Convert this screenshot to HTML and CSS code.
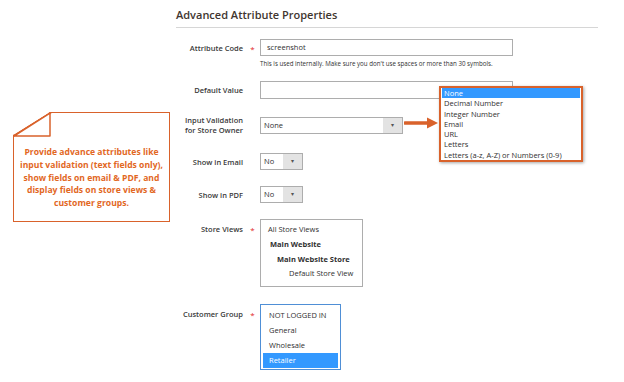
FILE: index.html
```html
<!DOCTYPE html>
<html lang="en">
<head>
    <meta charset="UTF-8">
    <title>Advanced Attribute Properties</title>
    <link rel="stylesheet" href="styles.css">
</head>
<body>
    <div class="page">
        <h2 class="section-title">Advanced Attribute Properties</h2>

        <div class="field row-code">
            <label class="field-label">Attribute Code</label>
            <span class="req">*</span>
            <div class="control">
                <div class="input input-wide">screenshot</div>
                <div class="note">This is used internally. Make sure you don't use spaces or more than 30 symbols.</div>
            </div>
        </div>

        <div class="field row-default">
            <label class="field-label">Default Value</label>
            <span class="req"></span>
            <div class="control">
                <div class="input input-wide"></div>
            </div>
        </div>

        <div class="field row-validation">
            <label class="field-label">Input Validation for Store Owner</label>
            <span class="req"></span>
            <div class="control">
                <div class="select select-mid">
                    <span class="select-value">None</span>
                    <span class="select-btn">&#9662;</span>
                </div>
            </div>
        </div>

        <div class="field row-email">
            <label class="field-label">Show in Email</label>
            <span class="req"></span>
            <div class="control">
                <div class="select select-small">
                    <span class="select-value">No</span>
                    <span class="select-btn">&#9662;</span>
                </div>
            </div>
        </div>

        <div class="field row-pdf">
            <label class="field-label">Show in PDF</label>
            <span class="req"></span>
            <div class="control">
                <div class="select select-small">
                    <span class="select-value">No</span>
                    <span class="select-btn">&#9662;</span>
                </div>
            </div>
        </div>

        <div class="field field-top row-stores">
            <label class="field-label">Store Views</label>
            <span class="req">*</span>
            <div class="control">
                <div class="multi multi-stores">
                    <div class="opt">All Store Views</div>
                    <div class="opt opt-group">Main Website</div>
                    <div class="opt opt-group opt-sub">Main Website Store</div>
                    <div class="opt opt-view">Default Store View</div>
                </div>
            </div>
        </div>

        <div class="field field-top row-groups">
            <label class="field-label">Customer Group</label>
            <span class="req">*</span>
            <div class="control">
                <div class="multi multi-groups">
                    <div class="opt">NOT LOGGED IN</div>
                    <div class="opt">General</div>
                    <div class="opt">Wholesale</div>
                    <div class="opt opt-selected">Retailer</div>
                </div>
            </div>
        </div>

        <!-- annotation: callout note -->
        <div class="callout">
            <svg class="callout-fold" width="40" height="26" viewBox="0 0 40 26">
                <path d="M1 24 L37 1 L37 24 Z" fill="#fff" stroke="#d9622b" stroke-width="1.5" stroke-linejoin="round"/>
            </svg>
            <p>Provide advance attributes like input validation (text fields only), show fields on email &amp; PDF, and display fields on store views &amp; customer groups.</p>
        </div>

        <!-- annotation: arrow + open dropdown -->
        <svg class="pointer" width="36" height="12" viewBox="0 0 36 12">
            <path d="M1 6 H26" stroke="#d9622b" stroke-width="3.5" stroke-linecap="round"/>
            <path d="M23 0.5 L34 6 L23 11.5 Z" fill="#d9622b"/>
        </svg>
        <ul class="dropdown">
            <li class="active">None</li>
            <li>Decimal Number</li>
            <li>Integer Number</li>
            <li>Email</li>
            <li>URL</li>
            <li>Letters</li>
            <li>Letters (a-z, A-Z) or Numbers (0-9)</li>
        </ul>
    </div>
</body>
</html>
```

FILE: styles.css
```css
* {
    margin: 0;
    padding: 0;
    box-sizing: border-box;
}

body {
    font-family: 'Open Sans', 'Liberation Sans', sans-serif;
    background: #fff;
    color: #333;
}

.page {
    position: relative;
    width: 624px;
    height: 382px;
    padding: 7px 26px 0 176px;
}

.section-title {
    font-size: 11px;
    font-weight: 600;
    color: #41362f;
    padding-bottom: 5px;
    border-bottom: 1px solid #d6d6d6;
    margin-bottom: 11px;
}

.field {
    display: grid;
    grid-template-columns: 67px 17px auto;
    align-items: center;
}

.field-top {
    align-items: start;
}

.field-label {
    font-size: 7.5px;
    font-weight: 600;
    color: #3a3a3a;
    text-align: right;
    line-height: 10px;
}

.field-top .field-label {
    padding-top: 5px;
}

.req {
    color: #e22626;
    font-size: 8px;
    text-align: center;
    padding-left: 2px;
}

.field-top .req {
    padding-top: 5px;
}

.input {
    height: 17px;
    border: 1px solid #adadad;
    background: #fff;
    font-size: 7.5px;
    line-height: 15px;
    padding: 0 6px;
    color: #303030;
}

.input-wide {
    width: 253px;
}

.note {
    font-size: 6.2px;
    color: #303030;
    margin-top: 3px;
}

.row-code {
    align-items: start;
}

.row-code .field-label,
.row-code .req {
    padding-top: 4px;
}

.row-default {
    margin-top: 13px;
}

.row-default .input {
    height: 18px;
}

.row-validation {
    margin-top: 16px;
}

.row-email {
    margin-top: 18px;
}

.row-pdf {
    margin-top: 16px;
}

.row-stores {
    margin-top: 16px;
}

.row-groups {
    margin-top: 17px;
}

.select {
    display: flex;
    height: 17px;
    border: 1px solid #adadad;
    background: #fff;
    font-size: 7.5px;
    color: #303030;
}

.select-mid {
    width: 143px;
}

.select-small {
    width: 43px;
}

.select-value {
    flex: 1;
    line-height: 15px;
    padding-left: 3px;
}

.select-btn {
    width: 19px;
    background: #e3e3e3;
    text-align: center;
    font-size: 6px;
    line-height: 15px;
    color: #555;
}

.multi {
    border: 1px solid #adadad;
    background: #fff;
    font-size: 7.5px;
    color: #303030;
}

.multi-stores {
    width: 103px;
    height: 68px;
    padding: 2px 7px;
}

.multi-stores .opt {
    line-height: 14.8px;
}

.opt-group {
    font-weight: 700;
    padding-left: 2px;
}

.opt-sub {
    padding-left: 9px;
}

.opt-view {
    padding-left: 21px;
}

.multi-groups {
    width: 81px;
    height: 66px;
    border-color: #4f8fd6;
    padding: 3px 2px;
}

.multi-groups .opt {
    line-height: 15px;
    padding-left: 6px;
}

.opt-selected {
    background: #3399ff;
    color: #fff;
}

/* annotations */
.callout {
    position: absolute;
    left: 13px;
    top: 112px;
    width: 157px;
    height: 110px;
    border: 1.5px solid #d9622b;
    clip-path: polygon(37px 0, 100% 0, 100% 100%, 0 100%, 0 23px);
    background: #fff;
    display: flex;
    align-items: center;
    justify-content: center;
    padding: 26px 2px 4px;
}

.callout::before {
    content: '';
    position: absolute;
    left: -1px;
    top: -1px;
    width: 45px;
    height: 1.5px;
    background: #d9622b;
    transform-origin: 0 0;
    transform: translate(0, 23px) rotate(-32deg);
}

.callout-fold {
    position: absolute;
    left: -1px;
    top: -1px;
}

.callout p {
    font-size: 8.6px;
    font-weight: 700;
    color: #e2681f;
    text-align: center;
    line-height: 12.7px;
}

.pointer {
    position: absolute;
    left: 404px;
    top: 117px;
}

.dropdown {
    position: absolute;
    left: 439px;
    top: 86px;
    width: 144px;
    height: 76px;
    list-style: none;
    border: 2px solid #d9622b;
    background: #fff;
    box-shadow: 1px 1px 3px rgba(0, 0, 0, 0.35);
    font-size: 7.5px;
    color: #303030;
    padding: 0 1px;
}

.dropdown li {
    line-height: 10.3px;
    padding-left: 2px;
}

.dropdown .active {
    background: #3399ff;
    color: #fff;
}
```
